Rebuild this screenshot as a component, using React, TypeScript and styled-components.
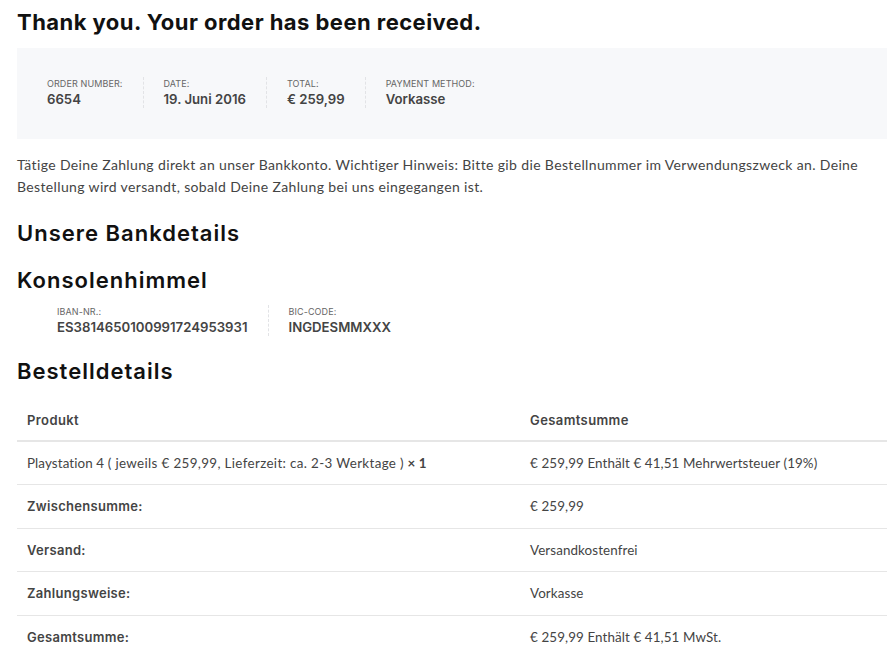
import React from "react";
import styled, { createGlobalStyle } from "styled-components";

const Global = createGlobalStyle`
  html, body { margin: 0; padding: 0; background: #fff; }
  body { font-family: "Lato", "Liberation Sans", sans-serif; color: #444; }
  * { box-sizing: border-box; }
`;

const Page = styled.div`
  padding: 0 7px 0 17px;
  width: 894px;
`;

const Title = styled.h1`
  margin: 0;
  padding-top: 9px;
  font-family: "Inter", sans-serif;
  font-weight: 700;
  font-size: 22px;
  line-height: 26px;
  color: #111;
  letter-spacing: 0.45px;
`;

const Overview = styled.div`
  margin-top: 13px;
  background: #f7f8fa;
  height: 91px;
  padding: 29px 30px 0 30px;
  display: flex;
`;

const Item = styled.div<{ $first?: boolean }>`
  display: flex;
  flex-direction: column;
  padding: 0 20px 0 ${(p) => (p.$first ? 0 : 20)}px;
  border-left: ${(p) => (p.$first ? "none" : "1px dashed #e2e3e6")};
  height: 31px;
`;

const Label = styled.span`
  font-family: "Inter", sans-serif;
  font-size: 9px;
  line-height: 11px;
  text-transform: uppercase;
  color: #666;
  letter-spacing: 0.1px;
  margin-top: 1px;
`;

const Value = styled.span`
  font-family: "Inter", sans-serif;
  font-weight: 600;
  font-size: 13.2px;
  line-height: 18px;
  margin-top: 1px;
  color: #444;
`;

const Para = styled.p`
  margin: 15px 0 0 0;
  font-family: "Lato", sans-serif;
  font-size: 14px;
  line-height: 22px;
  letter-spacing: 0.36px;
  color: #444;
`;

const H2 = styled.h2<{ $mt: number }>`
  margin: ${(p) => p.$mt}px 0 0 0;
  font-family: "Inter", sans-serif;
  font-weight: 600;
  font-size: 22px;
  line-height: 26px;
  letter-spacing: 1px;
  color: #111;
`;

const BankRow = styled.div`
  display: flex;
  padding-left: 40px;
  margin-top: 12px;
`;

const Table = styled.table`
  margin-top: 15px;
  width: 870px;
  border-collapse: collapse;
  font-family: "Lato", sans-serif;
  font-size: 13.4px;
  color: #444;
`;

const Th = styled.th<{ $w?: string }>`
  text-align: left;
  font-family: "Inter", sans-serif;
  font-weight: 600;
  font-size: 13px;
  letter-spacing: 0.4px;
  padding: 0 10px;
  height: 42px;
  border-bottom: 2px solid #e6e6e6;
  width: ${(p) => p.$w ?? "auto"};
`;

const Td = styled.td<{ $bold?: boolean }>`
  padding: 0 10px;
  height: 43.5px;
  font-family: ${(p) => (p.$bold ? '"Inter", sans-serif' : '"Lato", sans-serif')};
  font-size: ${(p) => (p.$bold ? "13px" : "13.4px")};
  font-weight: ${(p) => (p.$bold ? 600 : 400)};
  letter-spacing: ${(p) => (p.$bold ? "0.3px" : "0.1px")};
  border-top: 1px solid #e6e6e6;
`;

const Meta = styled.span`
  font-weight: 400;
  letter-spacing: 0.35px;
`;

const Strong = styled.strong`
  font-weight: 700;
`;

const rows: [string, string][] = [
  ["Zwischensumme:", "€ 259,99"],
  ["Versand:", "Versandkostenfrei"],
  ["Zahlungsweise:", "Vorkasse"],
  ["Gesamtsumme:", "€ 259,99 Enthält € 41,51 MwSt."],
];

export default function App() {
  return (
    <Page>
      <Global />
      <Title>Thank you. Your order has been received.</Title>
      <Overview>
        <Item $first>
          <Label>Order number:</Label>
          <Value>6654</Value>
        </Item>
        <Item>
          <Label>Date:</Label>
          <Value>19. Juni 2016</Value>
        </Item>
        <Item>
          <Label>Total:</Label>
          <Value>€ 259,99</Value>
        </Item>
        <Item>
          <Label>Payment method:</Label>
          <Value>Vorkasse</Value>
        </Item>
      </Overview>
      <Para>
        Tätige Deine Zahlung direkt an unser Bankkonto. Wichtiger Hinweis: Bitte gib die Bestellnummer im
        Verwendungszweck an. Deine Bestellung wird versandt, sobald Deine Zahlung bei uns eingegangen ist.
      </Para>
      <H2 $mt={22}>Unsere Bankdetails</H2>
      <H2 $mt={21}>Konsolenhimmel</H2>
      <BankRow>
        <Item $first>
          <Label>IBAN-Nr.:</Label>
          <Value>ES3814650100991724953931</Value>
        </Item>
        <Item>
          <Label>BIC-Code:</Label>
          <Value>INGDESMMXXX</Value>
        </Item>
      </BankRow>
      <H2 $mt={22}>Bestelldetails</H2>
      <Table>
        <thead>
          <tr>
            <Th $w="503px">Produkt</Th>
            <Th>Gesamtsumme</Th>
          </tr>
        </thead>
        <tbody>
          <tr>
            <Td>
              Playstation 4 <Meta>( jeweils € 259,99, Lieferzeit: ca. 2-3 Werktage )</Meta> <Strong>× 1</Strong>
            </Td>
            <Td>€ 259,99 Enthält € 41,51 Mehrwertsteuer (19%)</Td>
          </tr>
          {rows.map(([k, v]) => (
            <tr key={k}>
              <Td $bold>{k}</Td>
              <Td>{v}</Td>
            </tr>
          ))}
        </tbody>
      </Table>
    </Page>
  );
}
